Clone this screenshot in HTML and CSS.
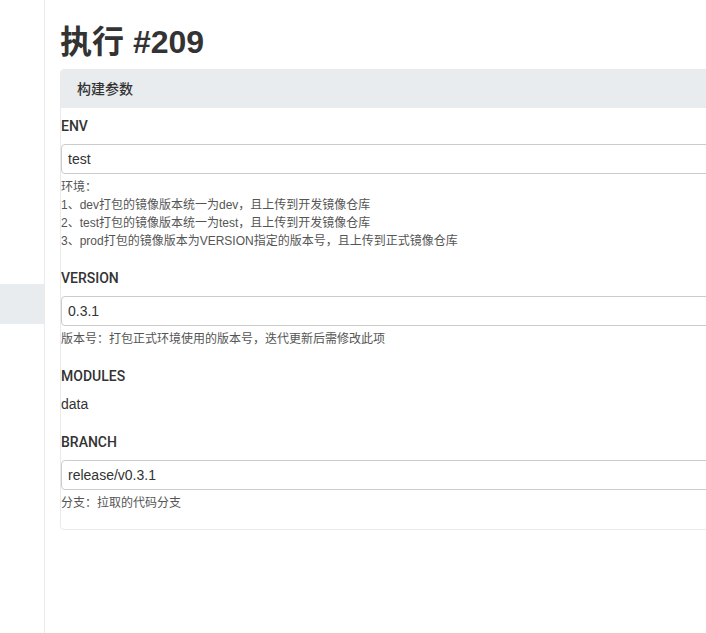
FILE: index.html
```html
<!DOCTYPE html>
<html lang="zh-CN">
<head>
<meta charset="utf-8">
<title>执行 #209</title>
<link rel="stylesheet" href="styles.css">
</head>
<body>
<div class="layout">
  <aside class="sidebar">
    <div class="side-item"></div>
    <div class="side-item active"></div>
  </aside>
  <main class="main">
    <h1 class="title">执行 #209</h1>
    <section class="card">
      <div class="card-header">构建参数</div>
      <div class="card-body">
        <div class="field first">
          <div class="label">ENV</div>
          <div class="input">test</div>
          <div class="help">环境：<br>1、dev打包的镜像版本统一为dev，且上传到开发镜像仓库<br>2、test打包的镜像版本统一为test，且上传到开发镜像仓库<br>3、prod打包的镜像版本为VERSION指定的版本号，且上传到正式镜像仓库</div>
        </div>
        <div class="field">
          <div class="label">VERSION</div>
          <div class="input">0.3.1</div>
          <div class="help">版本号：打包正式环境使用的版本号，迭代更新后需修改此项</div>
        </div>
        <div class="field">
          <div class="label">MODULES</div>
          <div class="value">data</div>
        </div>
        <div class="field">
          <div class="label">BRANCH</div>
          <div class="input">release/v0.3.1</div>
          <div class="help">分支：拉取的代码分支</div>
        </div>
      </div>
    </section>
  </main>
</div>
</body>
</html>
```

FILE: styles.css
```css
html, body {
  margin: 0;
  padding: 0;
  background: #fff;
}
body {
  font-family: "Liberation Sans", "Noto Sans CJK SC", Arial, sans-serif;
  color: #333;
  font-size: 14px;
  overflow: hidden;
}
.layout {
  display: flex;
  min-height: 633px;
}
.sidebar {
  width: 44px;
  flex: 0 0 44px;
  border-right: 1px solid #ebebeb;
  padding-top: 244px;
  box-sizing: content-box;
}
.side-item {
  height: 40px;
}
.side-item.active {
  background: #e9ecef;
}
.main {
  flex: 1;
  padding-left: 15px;
  overflow: hidden;
}
.title {
  margin: 25px 0 9px 0;
  font-size: 32px;
  line-height: 35px;
  font-weight: 700;
  color: #333;
}
.card {
  width: 700px;
  border: 1px solid #eaeaea;
  border-radius: 4px;
  overflow: hidden;
}
.card-header {
  background: #e9ecef;
  height: 38px;
  line-height: 38px;
  padding: 0 16px;
  font-size: 14px;
  font-weight: 500;
  color: #333;
}
.card-body {
  padding: 0 0 17px 0;
}
.field {
  margin-top: 18px;
}
.field.first {
  margin-top: 8px;
}
.label {
  font-family: Roboto, "Liberation Sans", "Noto Sans CJK SC", sans-serif;
  font-size: 14px;
  font-weight: 500;
  line-height: 20px;
  margin-bottom: 8px;
  color: #333;
}
.input {
  height: 30px;
  line-height: 28px;
  box-sizing: border-box;
  border: 1px solid #ccc;
  border-radius: 4px;
  padding: 0 6px;
  font-size: 14px;
  color: #333;
}
.help {
  margin-top: 4px;
  font-size: 12px;
  line-height: 18px;
  color: #555;
}
.value {
  font-size: 14px;
  line-height: 20px;
  color: #333;
}
```
